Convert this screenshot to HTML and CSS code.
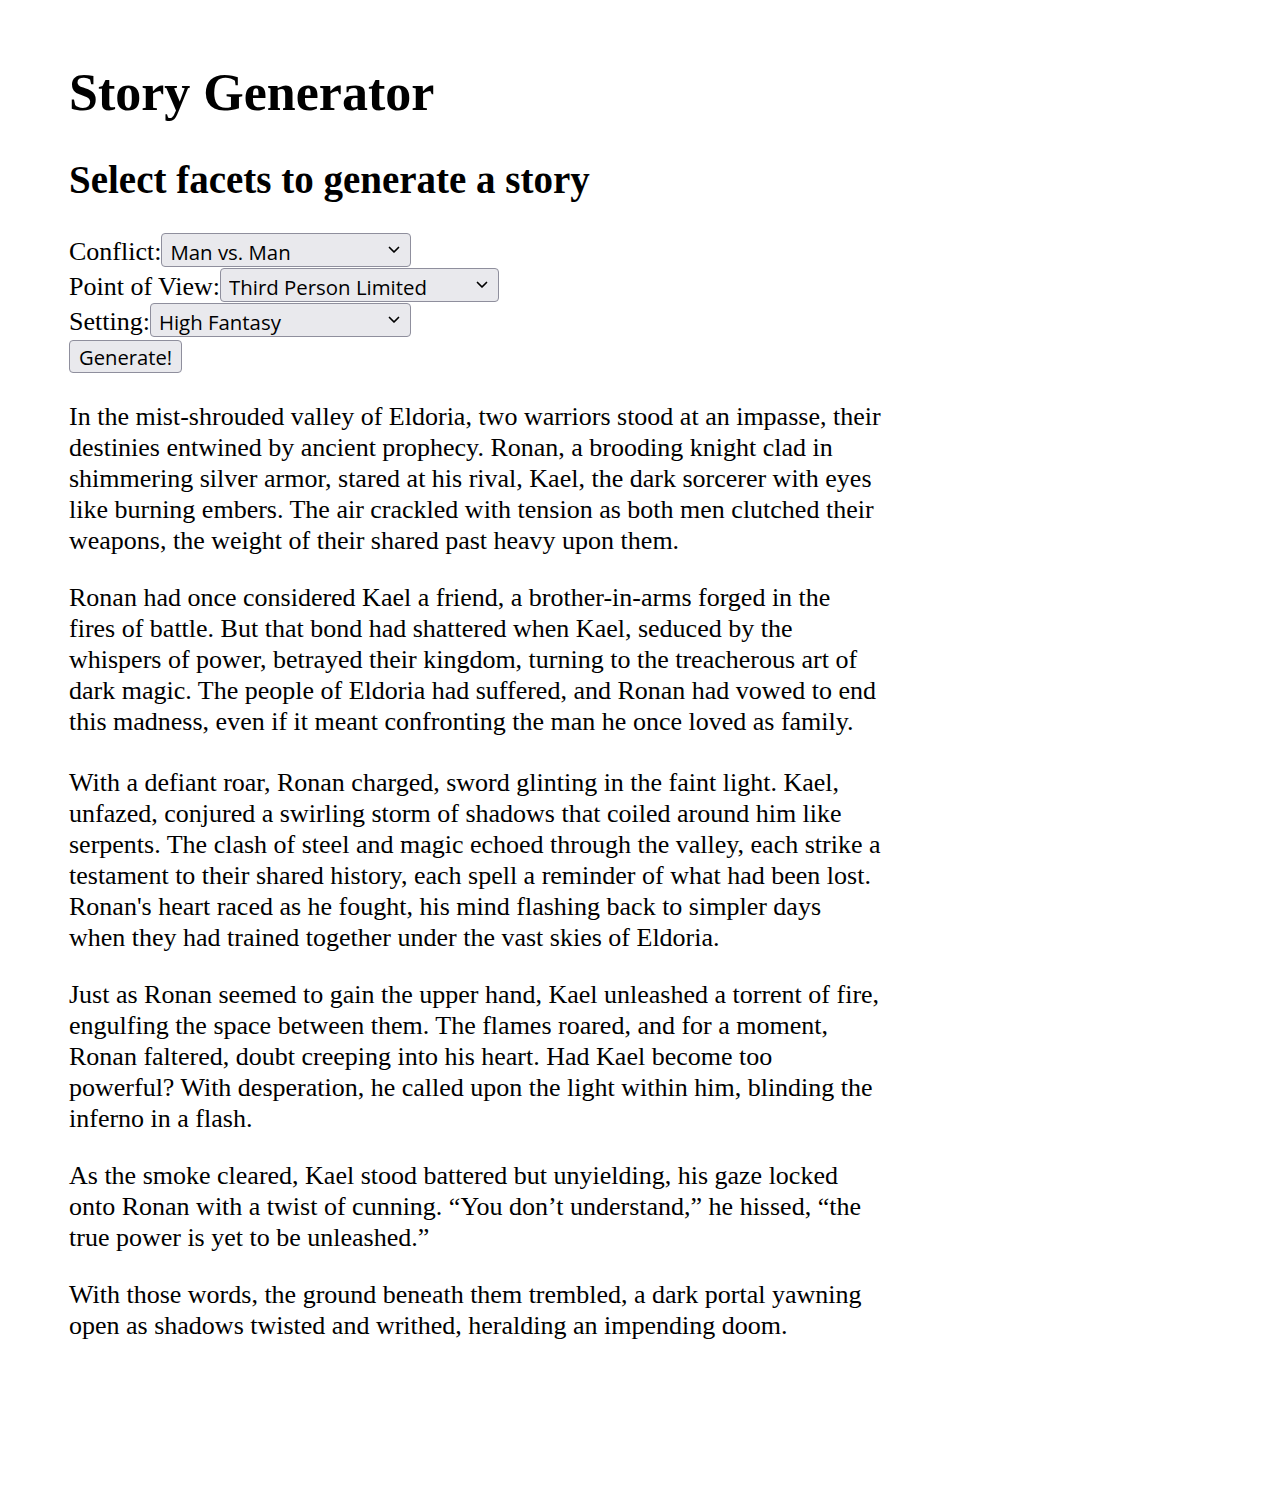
FILE: index.html
```html
<!DOCTYPE html>
<html lang="en">
<head>
<meta charset="utf-8">
<title>Story Generator</title>
<link rel="stylesheet" href="styles.css">
</head>
<body>
<main class="page">
  <h1 class="title">Story Generator</h1>
  <h2 class="subtitle">Select facets to generate a story</h2>
  <form class="facets">
    <div class="facet-row">
      <label class="facet-label" for="conflict">Conflict:</label>
      <select class="facet-select facet-select--conflict" id="conflict">
        <option>Man vs. Man</option>
      </select>
    </div>
    <div class="facet-row">
      <label class="facet-label" for="pov">Point of View:</label>
      <select class="facet-select facet-select--pov" id="pov">
        <option>Third Person Limited</option>
      </select>
    </div>
    <div class="facet-row">
      <label class="facet-label" for="setting">Setting:</label>
      <select class="facet-select facet-select--setting" id="setting">
        <option>High Fantasy</option>
      </select>
    </div>
    <div class="facet-row facet-row--button">
      <button type="button" class="generate-btn">Generate!</button>
    </div>
  </form>
  <div class="story">
    <p>In the mist-shrouded valley of Eldoria, two warriors stood at an impasse, their destinies entwined by ancient prophecy. Ronan, a brooding knight clad in shimmering silver armor, stared at his rival, Kael, the dark sorcerer with eyes like burning embers. The air crackled with tension as both men clutched their weapons, the weight of their shared past heavy upon them.</p>
    <p>Ronan had once considered Kael a friend, a brother-in-arms forged in the fires of battle. But that bond had shattered when Kael, seduced by the whispers of power, betrayed their kingdom, turning to the treacherous art of dark magic. The people of Eldoria had suffered, and Ronan had vowed to end this madness, even if it meant confronting the man he once loved as family.</p>
    <p class="story-gap">With a defiant roar, Ronan charged, sword glinting in the faint light. Kael, unfazed, conjured a swirling storm of shadows that coiled around him like serpents. The clash of steel and magic echoed through the valley, each strike a testament to their shared history, each spell a reminder of what had been lost. Ronan's heart raced as he fought, his mind flashing back to simpler days when they had trained together under the vast skies of Eldoria.</p>
    <p>Just as Ronan seemed to gain the upper hand, Kael unleashed a torrent of fire, engulfing the space between them. The flames roared, and for a moment, Ronan faltered, doubt creeping into his heart. Had Kael become too powerful? With desperation, he called upon the light within him, blinding the inferno in a flash.</p>
    <p>As the smoke cleared, Kael stood battered but unyielding, his gaze locked onto Ronan with a twist of cunning. “You don’t understand,” he hissed, “the true power is yet to be unleashed.”</p>
    <p>With those words, the ground beneath them trembled, a dark portal yawning open as shadows twisted and writhed, heralding an impending doom.</p>
  </div>
</main>
</body>
</html>
```

FILE: styles.css
```css
html, body {
  margin: 0;
  padding: 0;
  background: #ffffff;
}

body {
  font-family: "Liberation Serif", "Times New Roman", serif;
  font-size: 26px;
  line-height: 31px;
  color: #000000;
}

.page {
  padding: 28px 69px 40px 69px;
}

.title {
  font-size: 2em;
  font-weight: bold;
  line-height: normal;
  margin: 0.67em 0;
}

.subtitle {
  font-size: 1.5em;
  font-weight: bold;
  line-height: normal;
  margin: 0.83em 0 calc(0.83em - 1px) 0;
}

.facets {
  display: flex;
  flex-direction: column;
  align-items: flex-start;
  gap: 1px;
}

.facet-row {
  display: flex;
  align-items: baseline;
}

.facet-select {
  -webkit-appearance: none;
  appearance: none;
  box-sizing: border-box;
  height: 34px;
  margin: 0;
  padding: 3px 24px 0 8px;
  font-family: "Open Sans", "Noto Sans", sans-serif;
  font-size: 20.4px;
  color: #000000;
  background-color: #e9e9ed;
  background-image: url("data:image/svg+xml,%3Csvg xmlns='http://www.w3.org/2000/svg' width='12' height='8' viewBox='0 0 12 8'%3E%3Cpath d='M1.5 1.5 L6 6 L10.5 1.5' fill='none' stroke='%23000' stroke-width='1.7' stroke-linecap='round' stroke-linejoin='round'/%3E%3C/svg%3E");
  background-repeat: no-repeat;
  background-position: right 10px center;
  background-size: 12px 8px;
  border: 1px solid #8f8f9d;
  border-radius: 4px;
}

.facet-select--conflict {
  width: 250px;
}

.facet-select--pov {
  width: 279px;
}

.facet-select--setting {
  width: 261px;
}

.facet-row--button {
  margin-top: 2px;
}

.generate-btn {
  box-sizing: border-box;
  height: 33px;
  margin: 0;
  padding: 1px 9px 0 9px;
  font-family: "Open Sans", "Noto Sans", sans-serif;
  font-size: 20.2px;
  color: #000000;
  background-color: #e9e9ed;
  border: 1px solid #8f8f9d;
  border-radius: 4px;
}

.story {
  width: 812px;
  margin-top: 28px;
}

.story p {
  margin: 0 0 1em 0;
}

.story p.story-gap {
  padding-top: 4px;
}
```
